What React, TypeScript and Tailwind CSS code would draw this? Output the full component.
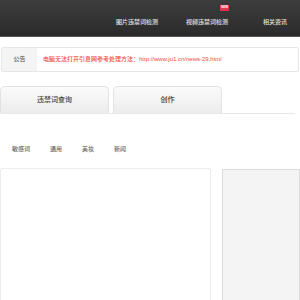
export default function App() {
  const nav = ["图片违禁词检测", "视频违禁词检测", "相关资讯"];
  const cats = ["敏感词", "通用", "美妆", "新闻"];

  return (
    <div
      className="w-[300px] h-[300px] overflow-hidden bg-white"
      style={{ fontFamily: '"Liberation Sans", "Noto Sans CJK SC", sans-serif' }}
    >
      {/* top nav */}
      <div className="h-[37px] bg-gradient-to-b from-[#3d3d3d] to-[#2b2b2b] border-b border-[#555] flex justify-end items-center pt-[7px] pr-[13px]">
        {nav.map((n, i) => (
          <div
            key={n}
            className={`relative text-[6px] leading-[8px] font-medium text-[#e2e2e2] ${i === 0 ? "mr-[28px]" : i === 1 ? "mr-[35px]" : ""}`}
          >
            {n}
            {i === 1 && (
              <span className="absolute -top-[13px] left-[34px] w-[9px] h-[6px] bg-[#e8334a] rounded-[1px] flex items-center justify-center text-white text-[3px] font-bold leading-none">
                NEW
              </span>
            )}
          </div>
        ))}
      </div>

      {/* notice */}
      <div className="mt-[10px] mx-[1px] h-[25px] border border-[#e6e6e6] flex items-center rounded-[2px]">
        <div className="w-[35px] h-full bg-[#f4f4f4] flex items-center justify-center text-[6px] font-medium text-[#555]">公告</div>
        <div className="pl-[6px] text-[6px] font-medium text-[#ef4b40] whitespace-nowrap">
          电脑无法打开引息网参考处理方法：http://www.ju1.cn/news-29.html
        </div>
      </div>

      {/* tabs */}
      <div className="mt-[14px] flex items-end gap-[4px] border-b border-[#e8e8e8] mr-[5px] h-[28px]">
        <div className="w-[109px] h-[27px] rounded-t-[5px] border border-b-0 border-[#e2e2e2] bg-gradient-to-b from-[#fbfbfb] to-[#ececec] flex items-center justify-center text-[7px] font-medium text-[#444]">
          违禁词查询
        </div>
        <div className="w-[109px] h-[27px] rounded-t-[5px] border border-b-0 border-[#e2e2e2] bg-gradient-to-b from-[#fbfbfb] to-[#ececec] flex items-center justify-center text-[7px] font-medium text-[#444]">
          创作
        </div>
      </div>

      {/* categories */}
      <div className="mt-[31px] flex pl-[12px] gap-[20px] text-[6px] leading-[8px] font-medium text-[#666]">
        {cats.map((c) => (
          <span key={c}>{c}</span>
        ))}
      </div>

      {/* panels */}
      <div className="mt-[15px] flex gap-[11px]">
        <div className="w-[211px] h-[140px] border border-[#ececec] rounded-[2px] bg-white" />
        <div className="flex-1 h-[140px] mt-[1px] border border-[#dcdcdc] bg-[#f4f4f4]" />
      </div>
    </div>
  );
}
